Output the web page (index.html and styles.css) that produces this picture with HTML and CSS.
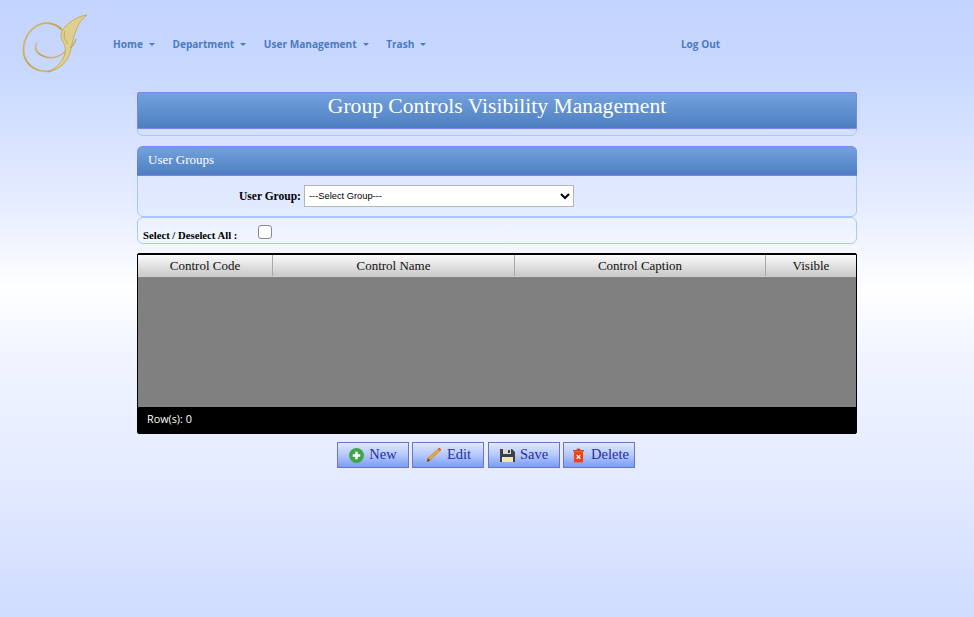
FILE: index.html
```html
<!DOCTYPE html>
<html lang="en">
<head>
<meta charset="utf-8">
<title>Group Controls Visibility Management</title>
<link rel="stylesheet" href="styles.css">
</head>
<body>
<header class="topbar">
  <svg class="logo" width="68" height="62" viewBox="0 0 68 62" fill="none">
    <defs>
      <linearGradient id="gold" x1="0" y1="0" x2="1" y2="1">
        <stop offset="0" stop-color="#d6c078"/>
        <stop offset="0.5" stop-color="#c2a348"/>
        <stop offset="1" stop-color="#d8c47e"/>
      </linearGradient>
    </defs>
    <path d="M41 17C34 9 22 8 14 14C5 20 1 32 3 42C6 54 18 60 29 58C36 56 41 52 44 48" stroke="url(#gold)" stroke-width="1.8"/>
    <path d="M16 29C13 35 15 40 22 43C31 47 39 44 46 37" stroke="url(#gold)" stroke-width="1.6"/>
    <path d="M66 2C58 3 49 8 44 14C40 18 39 23 41 27C43 30 45 34 44 40C42 48 36 55 27 59C38 56 46 50 49 40C51 32 52 24 56 15C58 10 62 5 66 2Z" fill="#dfd08f" stroke="#c2a348" stroke-width="0.8"/>
    <path d="M44 18C42 23 44 27 47 31" stroke="#c2a348" stroke-width="0.9"/>
    <path d="M49 35C52 33 54 30 55 26" stroke="#c6a850" stroke-width="1.2"/>
  </svg>
  <nav class="menu">
    <a class="menu-item">Home<i class="caret"></i></a>
    <a class="menu-item">Department<i class="caret"></i></a>
    <a class="menu-item">User Management<i class="caret"></i></a>
    <a class="menu-item">Trash<i class="caret"></i></a>
    <a class="menu-item logout">Log Out</a>
  </nav>
</header>
<main class="page">
  <section class="panel title-panel">
    <h1 class="bar title-bar">Group Controls Visibility Management</h1>
  </section>
  <section class="panel group-panel">
    <h2 class="bar group-bar">User Groups</h2>
    <div class="group-row">
      <label class="group-label" for="group">User Group:</label>
      <select class="group-select" id="group"><option>---Select Group---</option></select>
    </div>
  </section>
  <section class="panel select-panel">
    <span class="select-label">Select / Deselect All :</span>
    <input class="select-check" type="checkbox">
  </section>
  <section class="grid">
    <div class="grid-head">
      <div class="cell c1">Control Code</div>
      <div class="cell c2">Control Name</div>
      <div class="cell c3">Control Caption</div>
      <div class="cell c4">Visible</div>
    </div>
    <div class="grid-body"></div>
    <div class="grid-foot">Row(s): 0</div>
  </section>
  <div class="actions">
    <button class="btn" type="button">
      <svg width="15" height="15" viewBox="0 0 16 16"><circle cx="8" cy="8" r="8" fill="#3fa648"/><path d="M8 4v8M4 8h8" stroke="#fff" stroke-width="2.6"/></svg>New</button>
    <button class="btn" type="button">
      <svg width="17" height="17" viewBox="0 0 18 18"><path d="M15 1l2 2L5 14l-3 1 1-3z" fill="#eda92e" stroke="#b5761b" stroke-width=".6"/><path d="M2 16l.9-4 3 2.4z" fill="#6b5030"/><path d="M14 2l2 2 1-1-2-2z" fill="#c9503c"/></svg>Edit</button>
    <button class="btn" type="button">
      <svg width="15" height="15" viewBox="0 0 15 15"><path d="M0 1h12l3 3v10H0z" fill="#3c3f44"/><path d="M3 1h8v5H3z" fill="#d5d7da"/><path d="M8 2h2v3H8z" fill="#3c3f44"/><path d="M2 9h11v5H2z" fill="#f0e7b8"/></svg>Save</button>
    <button class="btn" type="button">
      <svg class="trash" width="11" height="15" viewBox="0 0 12 15"><path d="M0 1.5h12v1.5H0z" fill="#c8451c"/><path d="M4 0h4v1.5H4z" fill="#c8451c"/><path d="M1 3h10v12H1z" fill="#f5400f"/><path d="M4 7l4 4M8 7l-4 4" stroke="#fff" stroke-width="1.3"/></svg>Delete</button>
  </div>
</main>
</body>
</html>
```
FILE: styles.css
```css
* { box-sizing: border-box; }
html, body { height: 100%; }
body {
  margin: 0;
  min-height: 617px;
  overflow: hidden;
  font-family: "Liberation Serif", "Times New Roman", serif;
  background: linear-gradient(to bottom, #c3d4fe 0%, #c8d8ff 12%, #e4ebff 32%, #ffffff 47%, #f0f4ff 58%, #e6ecff 75%, #cfdcff 100%);
}
.topbar {
  height: 92px;
  display: flex;
  align-items: flex-start;
}
.logo { margin: 13px 0 0 21px; flex: none; }
.menu {
  display: flex;
  margin: 37px 0 0 24px;
  font-family: "Open Sans", sans-serif;
  font-size: 10.1px;
  font-weight: 700;
  line-height: 15px;
  color: #4a7bc0;
}
.menu-item { margin-right: 17.6px; white-space: nowrap; }
.caret {
  display: inline-block;
  margin-left: 6px;
  vertical-align: 2px;
  border-top: 3.5px solid #4a7bc0;
  border-left: 3.5px solid transparent;
  border-right: 3.5px solid transparent;
}
.logout { margin-left: 237px; margin-right: 0; }
.page { width: 720px; margin-left: 137px; }
.panel {
  border: 1px solid #a9c8f5;
  border-radius: 6px;
  background: transparent;
}
.bar {
  margin: 0;
  font-weight: 400;
  color: #fff;
  border: 1px solid #7a86ee;
  background: linear-gradient(to bottom, #74a2de, #4d7ec0);
}
.title-panel { height: 44px; }
.title-bar {
  height: 37px;
  margin: -1px -1px 0;
  width: 720px;
  border-radius: 2px 2px 0 0;
  font-size: 21.6px;
  line-height: 27px;
  text-align: center;
}
.group-panel { height: 71px; margin-top: 10px; background: rgba(220, 230, 255, 0.45); }
.group-bar {
  height: 30px;
  margin: -1px -1px 0;
  width: 720px;
  padding-left: 11px;
  border-width: 1px 0 1px 0;
  border-radius: 6px 6px 0 0;
  font-size: 13px;
  line-height: 26px;
}
.group-row { display: flex; align-items: center; height: 40px; padding-left: 100px; }
.group-label { font-size: 11.5px; font-weight: 700; width: 66px; padding-left: 1px; }
.group-select {
  width: 270px;
  height: 22px;
  font-family: "Liberation Sans", Arial, sans-serif;
  font-size: 9.3px;
  background: #fff;
  border: 1px solid #b5b5b5;
  padding-left: 0;
}
.select-panel { height: 27px; background: rgba(240, 244, 255, 0.4); display: flex; align-items: flex-start; }
.select-label { font-size: 10.7px; font-weight: 700; margin: 11px 0 0 5px; line-height: 13px; width: 115px; }
.select-check {
  appearance: none;
  width: 14px;
  height: 14px;
  margin: 7px 0 0 0;
  background: #fff;
  border: 1px solid #8a8a8a;
  border-radius: 3px;
}
.grid {
  margin-top: 9px;
  height: 181px;
  border: 1px solid #000;
  border-radius: 2px;
  display: flex;
  flex-direction: column;
  background: #000;
}
.grid-head {
  display: flex;
  height: 23px;
  flex: none;
  border-top: 1px solid #000;
  border-bottom: 1px solid #d0d0d0;
  background: linear-gradient(to bottom, #fbfbfb, #c9c9c9);
  font-size: 13px;
  line-height: 21px;
  color: #111;
}
.cell { text-align: center; border-right: 1px solid #a8a8a8; }
.c1 { width: 135px; }
.c2 { width: 242px; }
.c3 { width: 251px; }
.c4 { flex: 1; border-right: 0; }
.grid-body { height: 130px; background: #808080; flex: none; }
.grid-foot {
  flex: 1;
  padding: 4px 0 0 9px;
  font-family: "Open Sans", sans-serif;
  font-size: 10.8px;
  line-height: 16px;
  color: #fff;
}
.actions { display: flex; gap: 3px; margin: 8px 0 0 200px; }
.btn {
  display: flex;
  align-items: center;
  justify-content: center;
  gap: 5px;
  width: 72px;
  height: 26px;
  padding: 0 0 2px;
  border: 1px solid #7272c4;
  background: linear-gradient(to bottom, #dfe8ff, #b4c8fb 50%, #7a9cf8);
  color: #2b2b9e;
  font-family: "Liberation Serif", serif;
  font-size: 14.5px;
}
.btn svg { margin-top: 3px; }
.btn:nth-child(3) { margin-left: 1px; }
.btn .trash { margin: 3px 2px 0 4px; }
```
